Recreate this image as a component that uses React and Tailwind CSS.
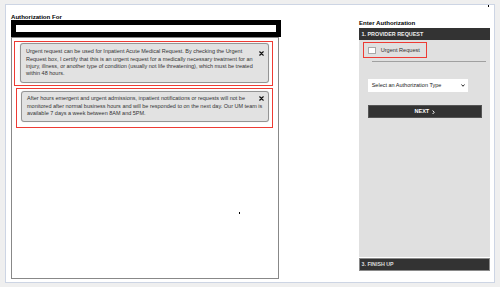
import React from "react";

const XIcon = () => (
  <svg width="5" height="5" viewBox="0 0 10 10" className="block">
    <path d="M1.8 1.8 L8.2 8.2 M8.2 1.8 L1.8 8.2" stroke="#111" strokeWidth="2.6" strokeLinecap="square" />
  </svg>
);

export default function App() {
  const font = { fontFamily: '"Liberation Sans", Arial, sans-serif' };
  return (
    <div className="relative w-[500px] h-[287px] bg-[#efefef] pt-[4px] pl-[5px] overflow-hidden" style={font}>
      <div className="w-[490px] h-[279px] border border-[#cdd5e4] bg-white flex">
        {/* Left column */}
        <div className="flex flex-col pl-[5px] pt-[8px] pb-[3px] w-[276px]">
          <div className="text-[6.1px] leading-[7px] h-[7px] font-bold text-black">Authorization For</div>
          <div className="w-[270px] h-[17px] border-[5px] border-black bg-white" />
          <div className="w-[268px] flex-1 border border-[#888888] pl-[2px] pt-[3px] flex flex-col">
            {/* alert 1 */}
            <div className="w-[259px] border-[1.5px] border-[#ee3b34] pl-[5px] pt-px pr-[3px] pb-[2px]">
              <div className="relative h-[40px] bg-[#e2e2e2] border border-[#949494] rounded-[3px] pl-[5px] flex items-center shadow-[0_0_1px_rgba(0,0,0,0.25)]">
                <div className="text-[5.5px] leading-[7.4px] text-[#333] whitespace-nowrap">
                  <div>Urgent request can be used for Inpatient Acute Medical Request. By checking the Urgent</div>
                  <div>Request box, I certify that this is an urgent request for a medically necessary treatment for an</div>
                  <div>injury, illness, or another type of condition (usually not life threatening), which must be treated</div>
                  <div>within 48 hours.</div>
                </div>
                <div className="absolute top-[6.5px] right-[4.5px]"><XIcon /></div>
              </div>
            </div>
            {/* alert 2 */}
            <div className="w-[257px] ml-[2px] mt-[2px] border-[1.5px] border-[#ee3b34] pl-[4px] pt-[2px] pr-[3px] pb-[5px]">
              <div className="relative h-[31px] bg-[#e2e2e2] border border-[#949494] rounded-[3px] pl-[5px] flex items-center shadow-[0_0_1px_rgba(0,0,0,0.25)]">
                <div className="text-[5.5px] leading-[7.8px] text-[#333] whitespace-nowrap">
                  <div>After hours emergent and urgent admissions, inpatient notifications or requests will not be</div>
                  <div>monitored after normal business hours and will be responded to on the next day. Our UM team is</div>
                  <div>available 7 days a week between 8AM and 5PM.</div>
                </div>
                <div className="absolute top-[4px] right-[4.5px]"><XIcon /></div>
              </div>
            </div>
          </div>
        </div>

        {/* Right column */}
        <div className="ml-auto mr-[4px] w-[131px] flex flex-col pt-[14px] pb-[11px]">
          <div className="text-[6.1px] leading-[7px] h-[7px] font-bold text-black mb-[2px]">Enter Authorization</div>
          <div className="h-[12px] bg-[#333333] pl-[2.5px] text-[5.4px] leading-[12px] font-bold text-[#eeeeee]">1. PROVIDER REQUEST</div>
          <div className="flex-1 bg-[#e0e0e0] flex flex-col pt-[2.3px]">
            <div className="ml-[3.7px] w-[64px] h-[16px] border-[1.5px] border-[#ee3b34] flex items-center pl-[4px]">
              <div className="w-[8px] h-[7.5px] bg-white border border-[#a8a8a8]" />
              <div className="ml-[5px] text-[5.6px] leading-[7px] text-[#333]">Urgent Request</div>
            </div>
            <div className="ml-[12.7px] mr-[4px] mt-[3px] h-px bg-[#a0a0a0]" />
            <div className="ml-[8.7px] mt-[17px] w-[100.6px] h-[12.7px] bg-white flex items-center pl-[4px] pr-[3px] justify-between">
              <span className="text-[5.5px] leading-[7px] text-[#222]">Select an Authorization Type</span>
              <svg width="4" height="3" viewBox="0 0 8 6" className="block">
                <path d="M1 1 L4 4.5 L7 1" stroke="#111" strokeWidth="1.8" fill="none" />
              </svg>
            </div>
            <div className="ml-[9px] mt-[13.3px] w-[113.7px] h-[13px] bg-[#333333] border border-[#555] flex items-center justify-center gap-[3px]">
              <span className="text-[5.5px] leading-[7px] font-bold text-white">NEXT</span>
              <svg width="3" height="4.5" viewBox="0 0 6 9" className="block">
                <path d="M1.2 1 L4.5 4.5 L1.2 8" stroke="#fff" strokeWidth="1.9" fill="none" />
              </svg>
            </div>
          </div>
          <div className="mt-px h-[13px] bg-[#333333] border border-[#8a8a8a] pl-[1.5px] text-[5.3px] leading-[11px] font-bold text-[#dddddd]">3. FINISH UP</div>
        </div>
      </div>
      <div className="absolute left-[487.5px] top-[5px] w-[1.5px] h-[1.5px] bg-black" />
      <div className="absolute left-[238.5px] top-[212px] w-[1.7px] h-[1.7px] bg-black" />
    </div>
  );
}
